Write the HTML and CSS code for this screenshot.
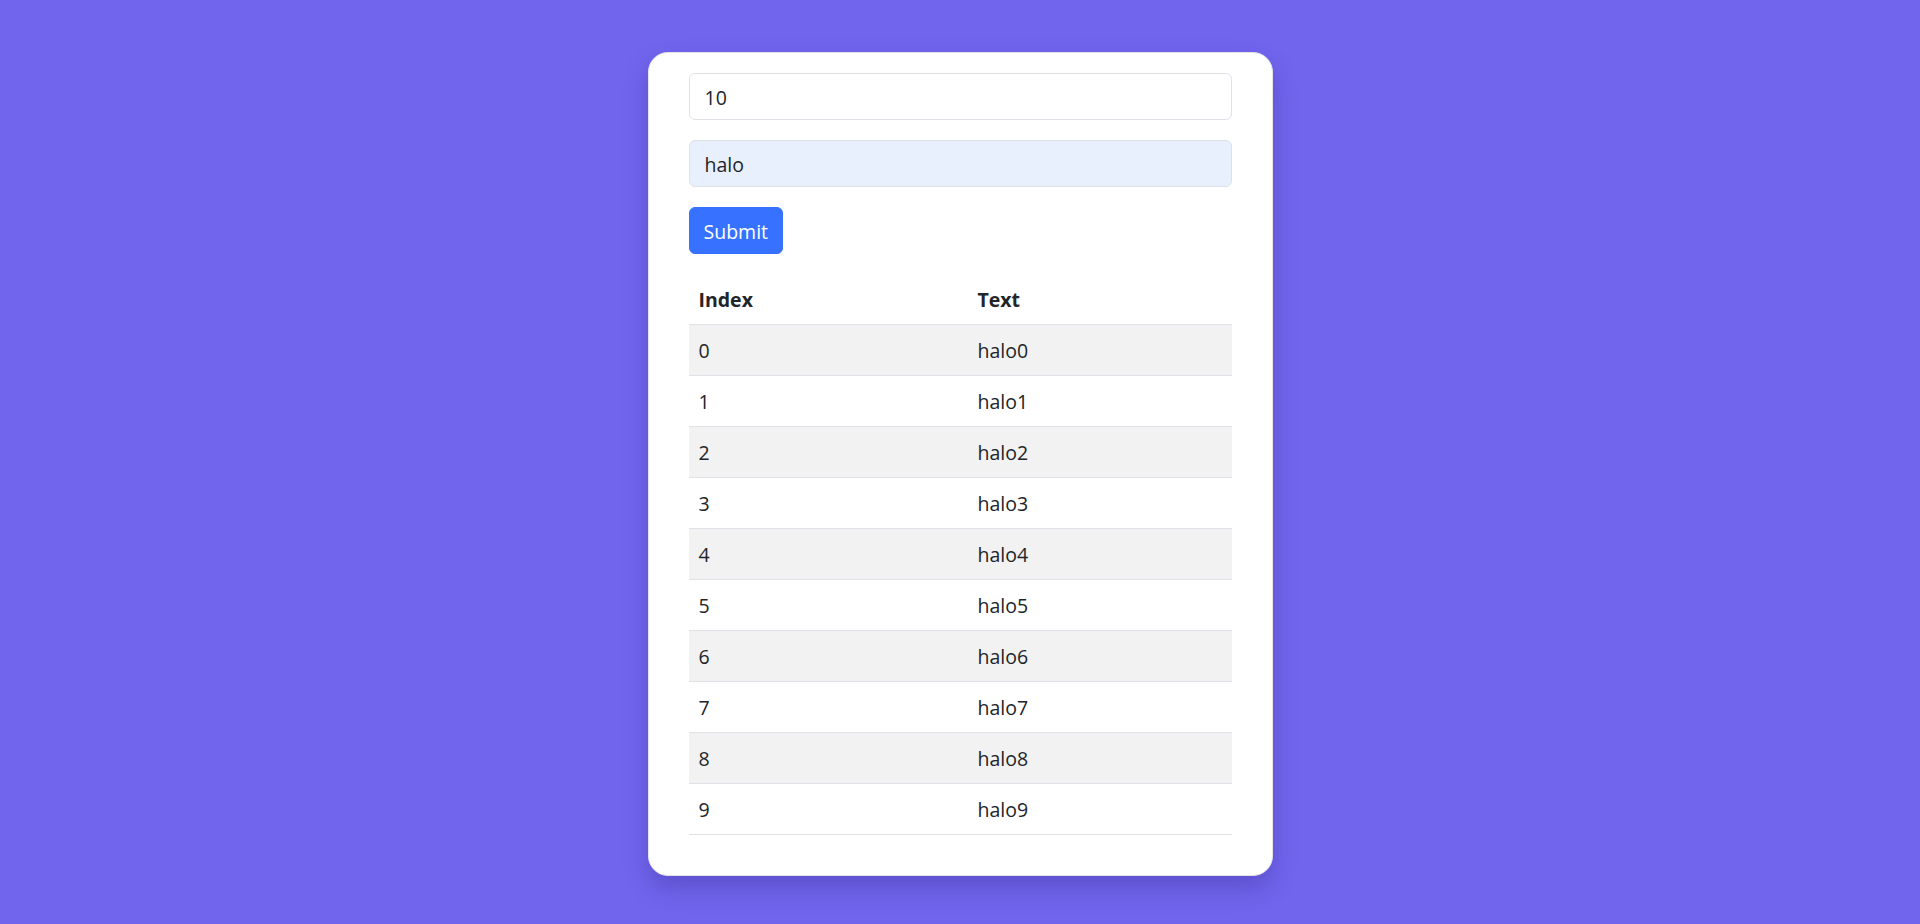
FILE: index.html
```html
<!DOCTYPE html>
<html lang="en">
<head>
<meta charset="utf-8">
<title>Form</title>
<link rel="stylesheet" href="styles.css">
</head>
<body>
<div class="card">
  <form class="form">
    <input class="field" type="text" value="10">
    <input class="field field-filled" type="text" value="halo">
    <button class="btn" type="button">Submit</button>
  </form>
  <table class="table">
    <thead>
      <tr><th class="col-index">Index</th><th>Text</th></tr>
    </thead>
    <tbody>
      <tr><td>0</td><td>halo0</td></tr>
      <tr><td>1</td><td>halo1</td></tr>
      <tr><td>2</td><td>halo2</td></tr>
      <tr><td>3</td><td>halo3</td></tr>
      <tr><td>4</td><td>halo4</td></tr>
      <tr><td>5</td><td>halo5</td></tr>
      <tr><td>6</td><td>halo6</td></tr>
      <tr><td>7</td><td>halo7</td></tr>
      <tr><td>8</td><td>halo8</td></tr>
      <tr><td>9</td><td>halo9</td></tr>
    </tbody>
  </table>
</div>
</body>
</html>
```

FILE: styles.css
```css
* { box-sizing: border-box; }

html, body {
  margin: 0;
  padding: 0;
}

body {
  background: #7165ee;
  font-family: "Open Sans", "Noto Sans", sans-serif;
  color: #212529;
  font-size: 20px;
  line-height: 1.5;
  min-height: 924px;
  padding-top: 52px;
}

.card {
  width: 625px;
  margin: 0 auto;
  background: #ffffff;
  border: 1px solid #e3e3e8;
  border-radius: 20px;
  padding: 20px 40px 20px 40px;
  box-shadow: 0 12px 24px rgba(40, 30, 120, 0.28);
}

.form {
  display: flex;
  flex-direction: column;
  align-items: flex-start;
  gap: 20px;
  margin-bottom: 20px;
}

.field {
  display: block;
  width: 100%;
  height: 47px;
  padding: 1px 15px 0 15px;
  font-family: inherit;
  font-size: 19.5px;
  color: #212529;
  background: #ffffff;
  border: 1px solid #dee2e6;
  border-radius: 6px;
  outline: none;
}

.field-filled {
  background: #e8f0fe;
}

.btn {
  height: 47px;
  padding: 1px 14px 0 14px;
  font-family: inherit;
  font-size: 19.5px;
  color: #ffffff;
  background: #3672ff;
  border: 1px solid #3672ff;
  border-radius: 6px;
}

.table {
  width: 100%;
  border-collapse: collapse;
  margin-bottom: 20px;
}

.table th,
.table td {
  text-align: left;
  padding: 11px 10px 9px 10px;
  line-height: 30px;
  font-size: 19.5px;
  border-bottom: 1px solid #dee2e6;
}

.table th {
  font-weight: 700;
}

.col-index {
  width: 279px;
}

.table tbody tr:nth-child(odd) td {
  background: #f2f2f2;
}
```
